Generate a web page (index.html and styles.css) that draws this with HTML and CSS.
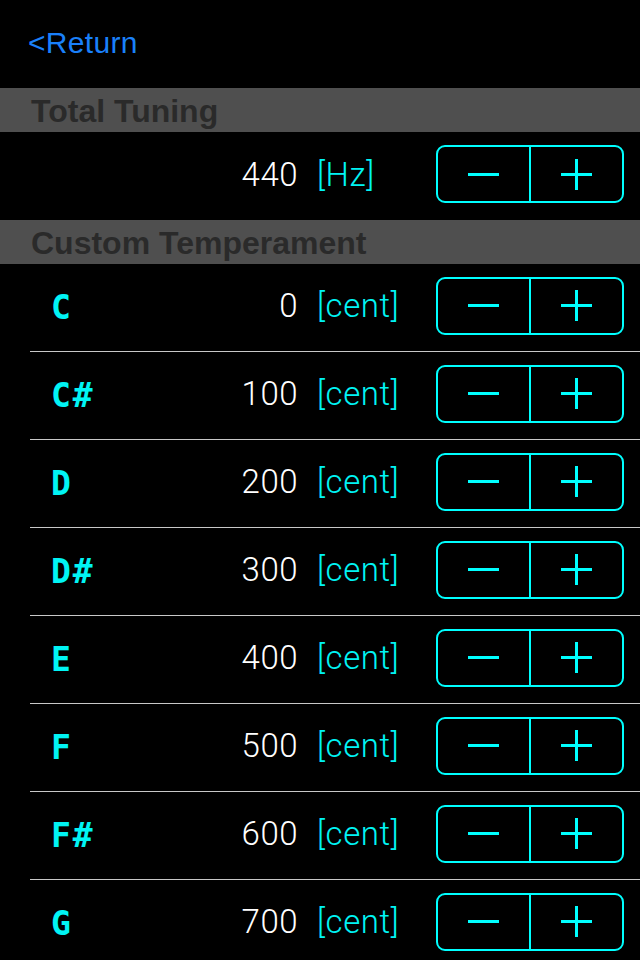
FILE: index.html
```html
<!DOCTYPE html>
<html>
<head>
<meta charset="utf-8">
<link rel="stylesheet" href="styles.css">
</head>
<body>
<div class="nav"><span class="back">&lt;Return</span></div>

<div class="section">Total Tuning</div>
<div class="row plain">
  <span class="note"></span>
  <span class="value">440</span>
  <span class="unit">[Hz]</span>
  <div class="stepper">
    <div class="btn"><svg width="31" height="31" viewBox="0 0 31 31"><rect x="0" y="14" width="31" height="3" fill="#00ffff"/></svg></div>
    <div class="btn"><svg width="31" height="31" viewBox="0 0 31 31"><rect x="0" y="14" width="31" height="3" fill="#00ffff"/><rect x="14" y="0" width="3" height="31" fill="#00ffff"/></svg></div>
  </div>
</div>

<div class="section">Custom Temperament</div>
<div class="list">
  <div class="row"><span class="note">C</span><span class="value">0</span><span class="unit">[cent]</span>
    <div class="stepper"><div class="btn"><svg width="31" height="31" viewBox="0 0 31 31"><rect x="0" y="14" width="31" height="3" fill="#00ffff"/></svg></div><div class="btn"><svg width="31" height="31" viewBox="0 0 31 31"><rect x="0" y="14" width="31" height="3" fill="#00ffff"/><rect x="14" y="0" width="3" height="31" fill="#00ffff"/></svg></div></div></div>
  <div class="row"><span class="note">C#</span><span class="value">100</span><span class="unit">[cent]</span>
    <div class="stepper"><div class="btn"><svg width="31" height="31" viewBox="0 0 31 31"><rect x="0" y="14" width="31" height="3" fill="#00ffff"/></svg></div><div class="btn"><svg width="31" height="31" viewBox="0 0 31 31"><rect x="0" y="14" width="31" height="3" fill="#00ffff"/><rect x="14" y="0" width="3" height="31" fill="#00ffff"/></svg></div></div></div>
  <div class="row"><span class="note">D</span><span class="value">200</span><span class="unit">[cent]</span>
    <div class="stepper"><div class="btn"><svg width="31" height="31" viewBox="0 0 31 31"><rect x="0" y="14" width="31" height="3" fill="#00ffff"/></svg></div><div class="btn"><svg width="31" height="31" viewBox="0 0 31 31"><rect x="0" y="14" width="31" height="3" fill="#00ffff"/><rect x="14" y="0" width="3" height="31" fill="#00ffff"/></svg></div></div></div>
  <div class="row"><span class="note">D#</span><span class="value">300</span><span class="unit">[cent]</span>
    <div class="stepper"><div class="btn"><svg width="31" height="31" viewBox="0 0 31 31"><rect x="0" y="14" width="31" height="3" fill="#00ffff"/></svg></div><div class="btn"><svg width="31" height="31" viewBox="0 0 31 31"><rect x="0" y="14" width="31" height="3" fill="#00ffff"/><rect x="14" y="0" width="3" height="31" fill="#00ffff"/></svg></div></div></div>
  <div class="row"><span class="note">E</span><span class="value">400</span><span class="unit">[cent]</span>
    <div class="stepper"><div class="btn"><svg width="31" height="31" viewBox="0 0 31 31"><rect x="0" y="14" width="31" height="3" fill="#00ffff"/></svg></div><div class="btn"><svg width="31" height="31" viewBox="0 0 31 31"><rect x="0" y="14" width="31" height="3" fill="#00ffff"/><rect x="14" y="0" width="3" height="31" fill="#00ffff"/></svg></div></div></div>
  <div class="row"><span class="note">F</span><span class="value">500</span><span class="unit">[cent]</span>
    <div class="stepper"><div class="btn"><svg width="31" height="31" viewBox="0 0 31 31"><rect x="0" y="14" width="31" height="3" fill="#00ffff"/></svg></div><div class="btn"><svg width="31" height="31" viewBox="0 0 31 31"><rect x="0" y="14" width="31" height="3" fill="#00ffff"/><rect x="14" y="0" width="3" height="31" fill="#00ffff"/></svg></div></div></div>
  <div class="row"><span class="note">F#</span><span class="value">600</span><span class="unit">[cent]</span>
    <div class="stepper"><div class="btn"><svg width="31" height="31" viewBox="0 0 31 31"><rect x="0" y="14" width="31" height="3" fill="#00ffff"/></svg></div><div class="btn"><svg width="31" height="31" viewBox="0 0 31 31"><rect x="0" y="14" width="31" height="3" fill="#00ffff"/><rect x="14" y="0" width="3" height="31" fill="#00ffff"/></svg></div></div></div>
  <div class="row"><span class="note">G</span><span class="value">700</span><span class="unit">[cent]</span>
    <div class="stepper"><div class="btn"><svg width="31" height="31" viewBox="0 0 31 31"><rect x="0" y="14" width="31" height="3" fill="#00ffff"/></svg></div><div class="btn"><svg width="31" height="31" viewBox="0 0 31 31"><rect x="0" y="14" width="31" height="3" fill="#00ffff"/><rect x="14" y="0" width="3" height="31" fill="#00ffff"/></svg></div></div></div>
</div>
</body>
</html>
```

FILE: styles.css
```css
html, body {
  margin: 0;
  padding: 0;
  background: #000;
}
body {
  width: 640px;
  height: 960px;
  overflow: hidden;
  font-family: "Liberation Sans", Arial, sans-serif;
}
.nav {
  box-sizing: border-box;
  height: 88px;
  padding: 26px 0 0 28px;
}
.back {
  color: #1a80fa;
  font-size: 30px;
  line-height: 34px;
  letter-spacing: 0.3px;
}
.section {
  box-sizing: border-box;
  height: 44px;
  padding: 1px 0 0 31px;
  background: #4f4f4f;
  color: #2a2a2a;
  font-size: 32px;
  font-weight: bold;
  line-height: 44px;
}
.row {
  box-sizing: border-box;
  height: 88px;
  margin-left: 30px;
  padding: 0 16px 4px 20px;
  display: flex;
  align-items: center;
  border-bottom: 1px solid #c8c8c8;
}
.row.plain {
  border-bottom: none;
}
.note {
  color: #00f4f4;
  font-family: "DejaVu Sans Mono", monospace;
  font-weight: bold;
  font-size: 33px;
  letter-spacing: 2px;
  width: 80px;
  padding-left: 1px;
  padding-top: 3px;
}
.value {
  flex: 1;
  text-align: right;
  color: #fff;
  font-family: Roboto, "Liberation Sans", sans-serif;
  font-weight: 300;
  font-size: 33px;
  letter-spacing: 0.5px;
}
.unit {
  width: 119px;
  margin-left: 19px;
  color: #00f4f4;
  font-family: Roboto, "Liberation Sans", sans-serif;
  font-weight: 300;
  font-size: 33px;
  letter-spacing: 0.6px;
}
.stepper {
  box-sizing: border-box;
  width: 188px;
  height: 58px;
  border: 2px solid #00ffff;
  border-radius: 9px;
  display: flex;
}
.btn {
  flex: 1;
  display: flex;
  align-items: center;
  justify-content: center;
}
.btn + .btn {
  border-left: 2px solid #00ffff;
}
.btn svg {
  display: block;
}
```
